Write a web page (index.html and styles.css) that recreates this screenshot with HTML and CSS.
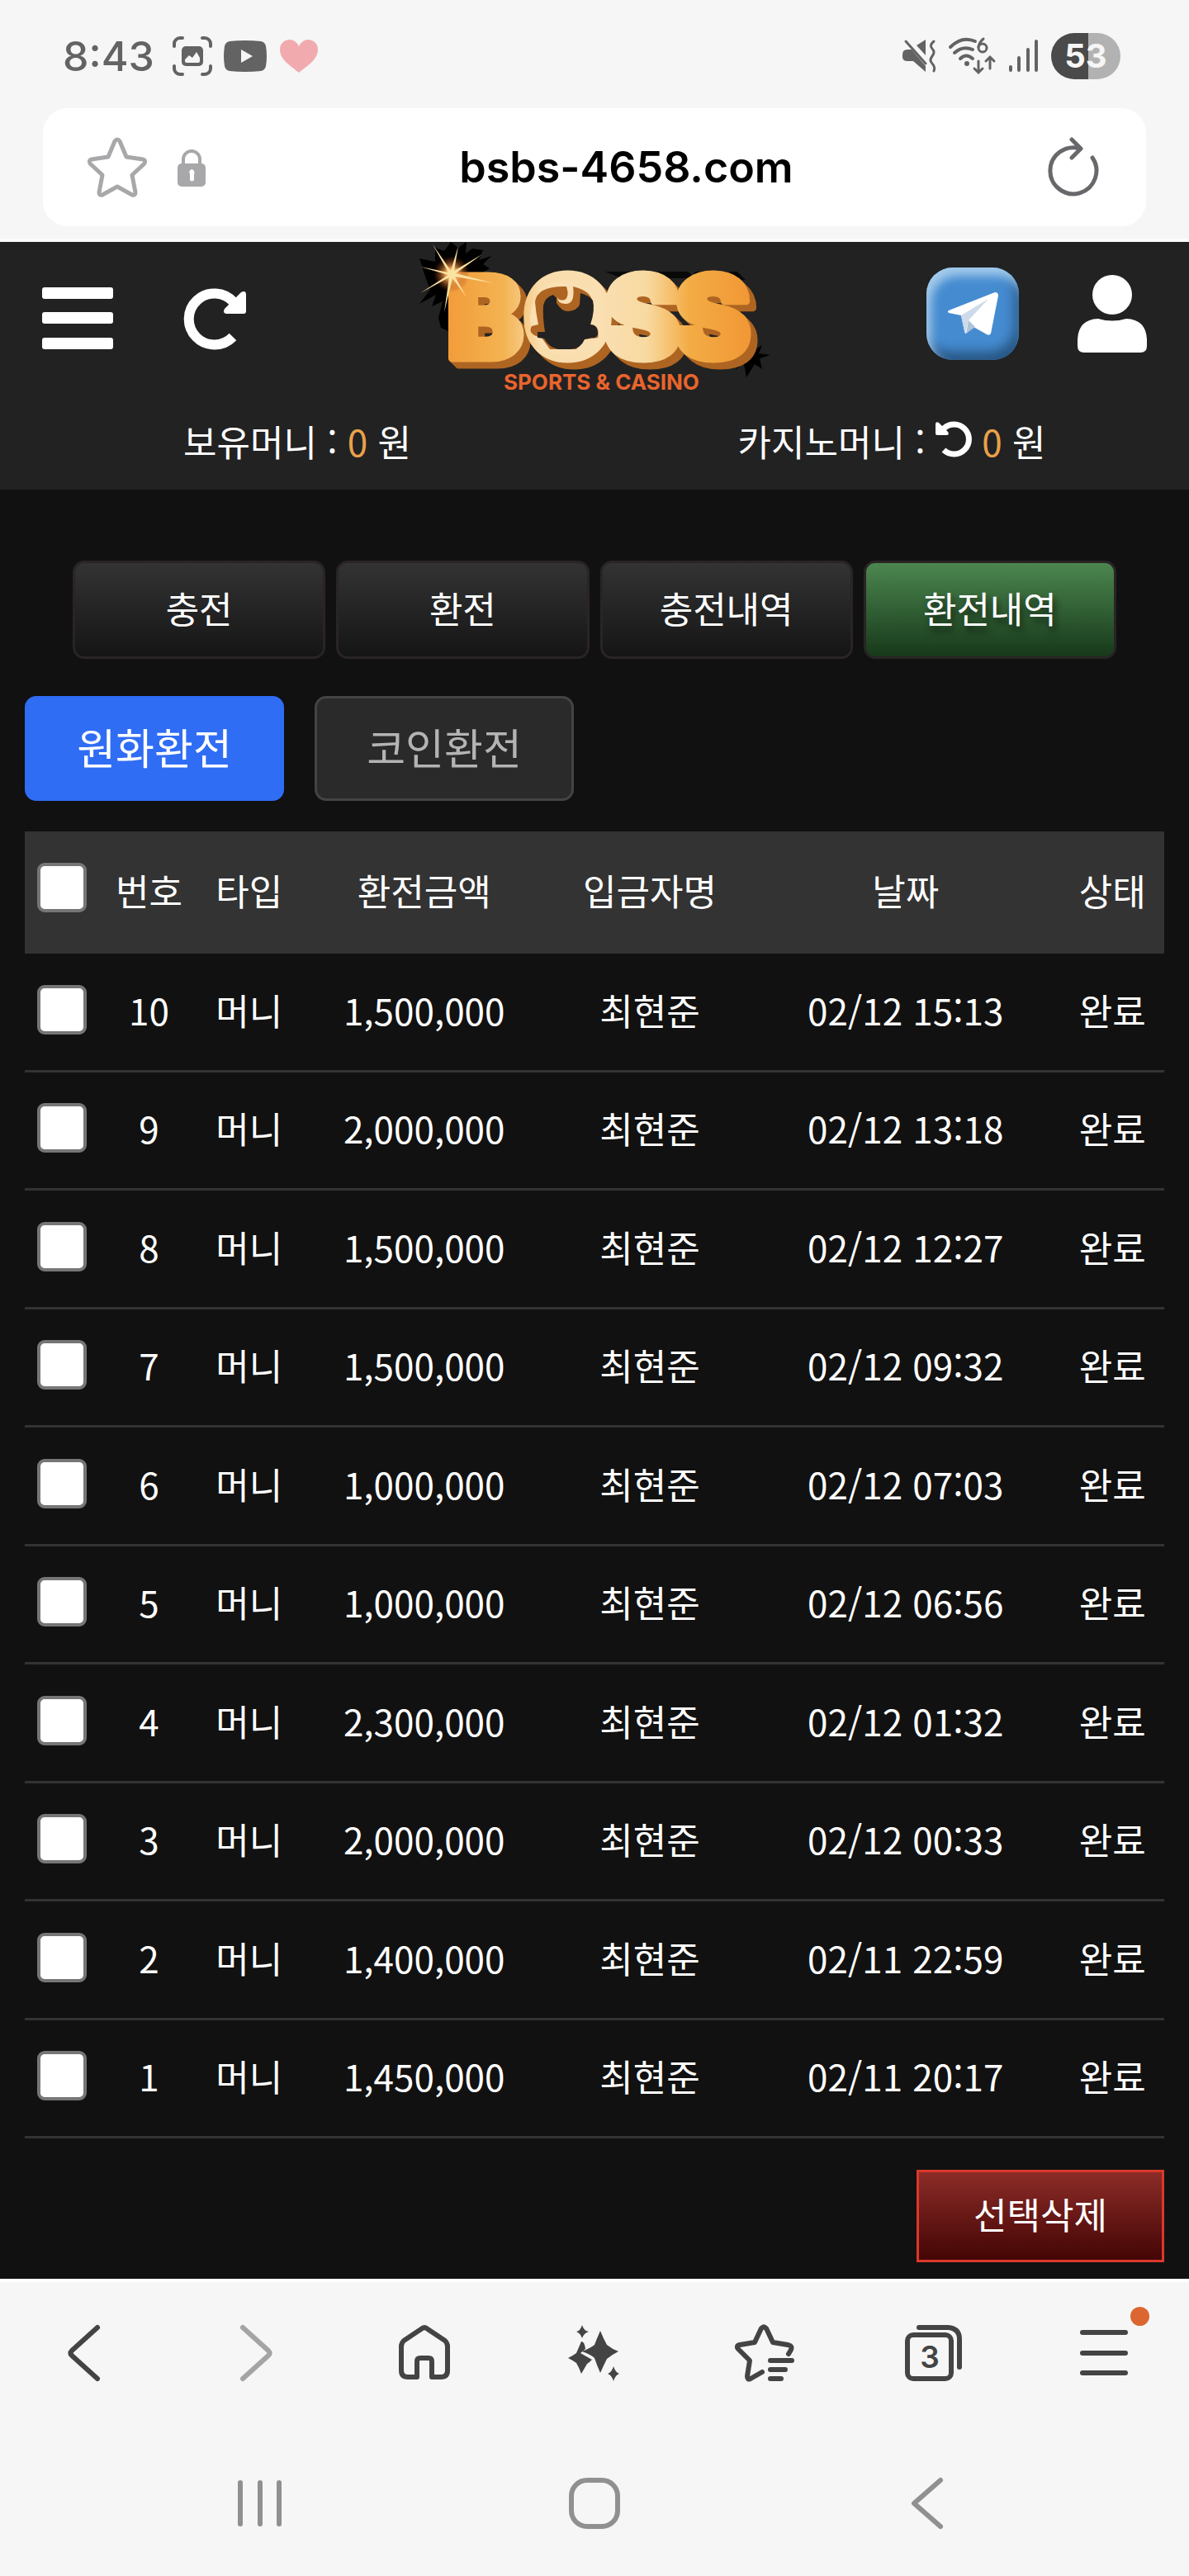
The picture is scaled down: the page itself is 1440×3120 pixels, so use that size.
FILE: index.html
```html
<!DOCTYPE html>
<html lang="ko">
<head>
    <meta charset="UTF-8">
    <meta name="viewport" content="width=device-width, initial-scale=1.0">
    <title>환전내역</title>
    <link rel="stylesheet" href="styles.css">
</head>
<body>
    <div class="browser-top">
        <div class="status-bar">
            <div class="status-left">
                <span class="clock">8:43</span>
                <svg width="48" height="48" viewBox="0 0 48 48" fill="none" stroke="#636363" stroke-width="4" stroke-linecap="round">
                    <path d="M2 12V9a7 7 0 0 1 7-7h3M36 2h3a7 7 0 0 1 7 7v3M46 36v3a7 7 0 0 1-7 7h-3M12 46H9a7 7 0 0 1-7-7v-3"/>
                    <rect x="11" y="12" width="26" height="24" rx="5" fill="#636363" stroke="none"/>
                    <path d="M15 28l5-5 4 3 5-7 4 7v4q0 2-2 2H17q-2 0-2-2z" fill="#f6f6f6" stroke="none"/>
                </svg>
                <svg width="52" height="38" viewBox="0 0 52 38">
                    <path d="M7 1q19-2 38 0 5 1 6 6 2 12 0 24-1 5-6 6-19 2-38 0-5-1-6-6-2-12 0-24 1-5 6-6z" fill="#636363"/>
                    <path d="M21 11l14 8-14 8z" fill="#f6f6f6"/>
                </svg>
                <svg class="heart" width="46" height="40" viewBox="0 0 46 40">
                    <path d="M23 40C12 31 0 24 0 12 0 4 6 0 12 0c5 0 9 4 11 8 2-4 6-8 11-8 6 0 12 4 12 12 0 12-12 19-23 28z" fill="#f1abae"/>
                </svg>
            </div>
            <div class="status-right">
                <svg width="40" height="40" viewBox="0 0 40 40">
                    <path d="M0 18q0-6 6-6h5l17 20v7L13 26H6q-6 0-6-5z" fill="#636363"/>
                    <path d="M17 7L28 0v19z" fill="#636363"/>
                    <path d="M4 2l24 27" stroke="#636363" stroke-width="3" stroke-linecap="round"/>
                    <path d="M38 2q-6 5-2 9t0 9 0 9 2 9" fill="none" stroke="#636363" stroke-width="3" stroke-linecap="round"/>
                </svg>
                <svg width="56" height="44" viewBox="0 0 56 44" fill="none" stroke="#636363" stroke-width="4" stroke-linecap="round">
                    <path d="M2 11Q16-3 32 4M7 18q10-9 22-4M14 25q7-7 15 0"/>
                    <circle cx="22" cy="31" r="3" fill="#636363" stroke="none"/>
                    <circle cx="41" cy="12" r="5" stroke-width="3"/>
                    <path d="M36 11q1-6 6-10M36 28v13M31 37l5 5 5-5M50 37V24M45 28l5-5 5 5" stroke-width="3"/>
                </svg>
                <svg width="36" height="40" viewBox="0 0 36 40" stroke="#636363" stroke-width="4" stroke-linecap="round">
                    <path d="M3 33v4M13 22v15M24 12v25M34 2v35"/>
                </svg>
                <span class="battery">53</span>
            </div>
        </div>
        <div class="url-bar">
            <div class="url-icons">
                <button type="button" aria-label="즐겨찾기">
                    <svg width="72" height="72" viewBox="0 0 72 72" fill="none" stroke="#a8a8aa" stroke-width="5" stroke-linejoin="round">
                        <path d="M33 4q3-4 6 0l8 19 20 3q4 1 2 5L54 45l4 21q0 4-4 3L36 59 18 69q-4 1-4-3l4-21L3 31q-2-4 2-5l20-3z"/>
                    </svg>
                </button>
                <svg class="lock" width="34" height="46" viewBox="0 0 34 46">
                    <path d="M7 22V13a10 10 0 0 1 20 0v9" fill="none" stroke="#a8a8aa" stroke-width="4"/>
                    <rect y="18" width="34" height="28" rx="5" fill="#a8a8aa"/>
                    <path d="M17 25a4 4 0 0 1 3 6v7q-3 3-5 0v-7a4 4 0 0 1 2-6z" fill="#fff"/>
                </svg>
            </div>
            <span class="url">bsbs-4658.com</span>
            <button type="button" aria-label="새로고침">
                <svg width="64" height="74" viewBox="0 0 64 74" fill="none" stroke="#68686c" stroke-width="5" stroke-linecap="round" stroke-linejoin="round">
                    <path d="M55 25A28 28 0 1 1 40 14M30 3l11 11-11 11"/>
                </svg>
            </button>
        </div>
    </div>

    <header class="header">
        <div class="header-row">
            <div class="header-left">
                <button type="button" aria-label="메뉴">
                    <svg width="86" height="76" viewBox="0 0 86 76" fill="#fff">
                        <rect width="86" height="14" rx="3"/>
                        <rect y="30" width="86" height="14" rx="3"/>
                        <rect y="61" width="86" height="14" rx="3"/>
                    </svg>
                </button>
                <button type="button" aria-label="다시 불러오기">
                    <svg width="74" height="74" viewBox="0 0 74 74">
                        <path d="M58 17A31 31 0 1 0 57 59" fill="none" stroke="#fff" stroke-width="12"/>
                        <path d="M67 5q6-3 6 3v20q0 3-3 3H49q-5-1-2-6z" fill="#fff"/>
                    </svg>
                </button>
            </div>
            <a href="#" class="logo" aria-label="BOSS">
                <svg width="424" height="182" viewBox="507 293 424 182">
                    <defs>
                        <linearGradient id="gold" gradientUnits="userSpaceOnUse" x1="544" y1="0" x2="906" y2="0">
                            <stop offset="0" stop-color="#f29d3a"/>
                            <stop offset=".18" stop-color="#f4b351"/>
                            <stop offset=".3" stop-color="#f9dcab"/>
                            <stop offset=".5" stop-color="#fadfb2"/>
                            <stop offset=".66" stop-color="#f8d9a0"/>
                            <stop offset=".8" stop-color="#f3ac45"/>
                            <stop offset="1" stop-color="#f19835"/>
                        </linearGradient>
                        <radialGradient id="glow">
                            <stop offset="0" stop-color="#fff3cf"/>
                            <stop offset=".3" stop-color="#f2a85a"/>
                            <stop offset="1" stop-color="#a03a10" stop-opacity="0"/>
                        </radialGradient>
                        <text id="word" class="logo-word" x="540 633 731 816" y="434">BOSS</text>
                    </defs>
                    <path d="M507 313l19 4 0-17 11 4 8-11 9 7 10-7-1 14 8-6 13 2-5 12 15-5-10 10 8 5-9 5 9 12h-24l-24 60-11-5-3-12 5-20-13 6 5-14-20 11 13-17-6-16z" fill="#000"/>
                    <path d="M732 329h100l10 8h-90zM840 329h52l10 10h-60z" fill="#090909"/>
                    <path d="M912 410l2 13 8-5-4 10 14 2-13 4 3 13-9-6-10 16-3-16-10 6 4-12z" fill="#000"/>
                    <g fill="#ae6522" stroke="#ae6522">
                        <use href="#word" x="8" y="8"/>
                        <use href="#word" x="6" y="6"/>
                        <use href="#word" x="4" y="4"/>
                        <use href="#word" x="2" y="2"/>
                    </g>
                    <use href="#word" fill="url(#gold)" stroke="url(#gold)"/>
                    <!-- face shape inside the O -->
                    <ellipse cx="685" cy="385" rx="44" ry="46" fill="#fadfb2"/>
                    <path d="M647 366q2-20 38-19h8q22 5 24 20l-3 27q12-1 9 15l-16 2-10 12h-32l-10-14q-18-4-12-14l8-2q-3-14-4-27z" fill="#ae6522"/>
                    <path d="M657 370q2-10 12-13l4 4v6q6 10 14 10 11-1 14-8l1-14q11 3 15 9 3 12-3 29 9 0 9 12-2 5-7 4l-9 2q-5 12-17 12h-15q-11-2-17-13l-8-1v-7h9q-3-18-2-32z" fill="#222"/>
                    <path d="M674 360q2 5 9 3 6-4 2-16 7-3 8 0 3 22-10 21-9-1-9-8z" fill="#fadfb2"/>
                    <!-- spark -->
                    <circle cx="546" cy="332" r="22" fill="url(#glow)"/>
                    <path d="M554 298L549 328 583 308 551 331 597 343 550 335 564 360 547 337 537 378 543 336 508 355 542 333 508 323 542 330 523 296 545 328z" fill="#fbe3a2"/>
                    <text class="logo-sub" x="609" y="472">SPORTS &amp; CASINO</text>
                </svg>
            </a>
            <div class="header-right">
                <a href="#" class="telegram" aria-label="텔레그램">
                    <svg width="62" height="52" viewBox="0 0 62 52">
                        <path d="M2 22L58 0q4 0 4 4l-9 46q-2 3-5 1L32 42l-8 7q-2 2-3-2l-4-19L2 25q-2-2 0-3z" fill="#fff"/>
                        <path d="M17 28L50 8 26 34l-4 16q-1-1-1-3z" fill="#cddaea"/>
                        <path d="M26 34l8 8-11 8z" fill="#adc3d8"/>
                    </svg>
                </a>
                <a href="#" aria-label="내 정보">
                    <svg width="84" height="94" viewBox="0 0 84 94" fill="#fff">
                        <circle cx="42" cy="24" r="24"/>
                        <path d="M25 53q17 5 34 0 24 1 25 25v8q0 8-8 8H8q-8 0-8-8v-8q1-24 25-25z"/>
                    </svg>
                </a>
            </div>
        </div>
        <div class="money-row">
            <div>보유머니 : <span class="amount">0</span> 원</div>
            <div>카지노머니 : <button type="button" class="money-reload" aria-label="머니 새로고침"><svg width="44" height="44" viewBox="0 0 44 44"><path d="M10 10A18 18 0 1 1 10 36" fill="none" stroke="#fff" stroke-width="7"/><path d="M4 3Q0 1 0 5v11q0 2 2 2h12q3-1 1-4z" fill="#fff"/></svg></button> <span class="amount">0</span> 원</div>
        </div>
    </header>

    <main class="content">
        <nav class="tabs">
            <a href="#">충전</a>
            <a href="#">환전</a>
            <a href="#">충전내역</a>
            <a href="#" class="active">환전내역</a>
        </nav>

        <div class="sub-tabs">
            <button type="button" class="active">원화환전</button>
            <button type="button">코인환전</button>
        </div>

        <table class="history">
            <colgroup>
                <col class="col-check">
                <col class="col-no">
                <col class="col-type">
                <col class="col-amount">
                <col class="col-name">
                <col class="col-date">
                <col class="col-state">
            </colgroup>
            <thead>
                <tr><th><input type="checkbox" aria-label="전체 선택"></th><th>번호</th><th>타입</th><th>환전금액</th><th>입금자명</th><th>날짜</th><th>상태</th></tr>
            </thead>
            <tbody>
                <tr><td><input type="checkbox" aria-label="10번 선택"></td><td>10</td><td>머니</td><td>1,500,000</td><td>최현준</td><td>02/12 15:13</td><td>완료</td></tr>
                <tr><td><input type="checkbox" aria-label="9번 선택"></td><td>9</td><td>머니</td><td>2,000,000</td><td>최현준</td><td>02/12 13:18</td><td>완료</td></tr>
                <tr><td><input type="checkbox" aria-label="8번 선택"></td><td>8</td><td>머니</td><td>1,500,000</td><td>최현준</td><td>02/12 12:27</td><td>완료</td></tr>
                <tr><td><input type="checkbox" aria-label="7번 선택"></td><td>7</td><td>머니</td><td>1,500,000</td><td>최현준</td><td>02/12 09:32</td><td>완료</td></tr>
                <tr><td><input type="checkbox" aria-label="6번 선택"></td><td>6</td><td>머니</td><td>1,000,000</td><td>최현준</td><td>02/12 07:03</td><td>완료</td></tr>
                <tr><td><input type="checkbox" aria-label="5번 선택"></td><td>5</td><td>머니</td><td>1,000,000</td><td>최현준</td><td>02/12 06:56</td><td>완료</td></tr>
                <tr><td><input type="checkbox" aria-label="4번 선택"></td><td>4</td><td>머니</td><td>2,300,000</td><td>최현준</td><td>02/12 01:32</td><td>완료</td></tr>
                <tr><td><input type="checkbox" aria-label="3번 선택"></td><td>3</td><td>머니</td><td>2,000,000</td><td>최현준</td><td>02/12 00:33</td><td>완료</td></tr>
                <tr><td><input type="checkbox" aria-label="2번 선택"></td><td>2</td><td>머니</td><td>1,400,000</td><td>최현준</td><td>02/11 22:59</td><td>완료</td></tr>
                <tr><td><input type="checkbox" aria-label="1번 선택"></td><td>1</td><td>머니</td><td>1,450,000</td><td>최현준</td><td>02/11 20:17</td><td>완료</td></tr>
            </tbody>
        </table>

        <div class="actions">
            <button type="button" class="delete">선택삭제</button>
        </div>
    </main>

    <footer class="browser-bottom">
        <nav class="toolbar">
            <button type="button" aria-label="뒤로">
                <svg width="44" height="68" viewBox="0 0 44 68"><path d="M37 3L6 31q-3 3 0 6l31 28"/></svg>
            </button>
            <button type="button" class="disabled" aria-label="앞으로">
                <svg width="44" height="68" viewBox="0 0 44 68"><path d="M7 3l31 28q3 3 0 6L7 65"/></svg>
            </button>
            <button type="button" aria-label="홈">
                <svg width="62" height="68" viewBox="0 0 62 68"><path d="M22 63H11q-8 0-8-8V26q0-4 3-7L27 5q4-4 8 0l21 14q3 3 3 7v29q0 8-8 8H40V44q0-4-4-4H26q-4 0-4 4z"/></svg>
            </button>
            <button type="button" aria-label="AI 도우미">
                <svg class="filled" width="64" height="68" viewBox="0 0 64 68">
                    <path d="M17 0q2 7 8 8-6 2-8 8-2-6-7-8 5-1 7-8zM16 20q4 0 5 9l-6 5 14 8q-4 4-6 5-4 7-7 12-3-8-6-13-4-3-10-6 6-3 10-6 3-7 6-14zM39 7q4 10 8 17 6 5 14 8-8 4-14 9-4 8-8 17-4-9-7-18-4-4-15-8 10-4 15-8 3-8 7-17zM55 50q2 7 7 9-5 2-7 9-2-7-7-9 5-2 7-9z"/>
                </svg>
            </button>
            <button type="button" aria-label="북마크 목록">
                <svg width="72" height="68" viewBox="0 0 72 68"><path d="M33 57L19 65q-4 2-4-3l3-19L4 29q-3-4 2-5l18-3 8-17q3-3 6 0l8 17 18 3q6 1 4 6l-3 5M43 43h26M43 54h18M43 65h13"/></svg>
            </button>
            <button type="button" class="tab-button" aria-label="열린 탭">
                <svg width="70" height="68" viewBox="0 0 70 68"><rect x="3" y="12" width="53" height="53" rx="7"/><path d="M17 3h35q14 1 14 14v34"/></svg>
                <span class="tab-count">3</span>
            </button>
            <button type="button" class="menu-button" aria-label="더보기">
                <svg width="58" height="68" viewBox="0 0 58 68"><path d="M3 9h52M3 34h52M3 58h52"/></svg>
                <span class="dot"></span>
            </button>
        </nav>
        <nav class="system-nav">
            <button type="button" aria-label="최근 앱">
                <svg width="60" height="62" viewBox="0 0 60 62"><path d="M4 6v50M28 6v50M51 6v50"/></svg>
            </button>
            <button type="button" aria-label="홈 화면">
                <svg width="62" height="62" viewBox="0 0 62 62"><rect x="3" y="3" width="56" height="56" rx="19"/></svg>
            </button>
            <button type="button" aria-label="이전">
                <svg width="40" height="62" viewBox="0 0 40 62"><path d="M36 3L4 31l32 28"/></svg>
            </button>
        </nav>
    </footer>
</body>
</html>
```

FILE: styles.css
```css
* {
    box-sizing: border-box;
}

body {
    margin: 0;
    background: #111;
    color: #fff;
    font-family: "Noto Sans CJK KR", sans-serif;
    font-size: 44px;
    font-weight: 400;
    line-height: 64px;
}

a {
    color: inherit;
    text-decoration: none;
}

button {
    margin: 0;
    padding: 0;
    border: none;
    background: none;
    color: inherit;
    font: inherit;
    cursor: pointer;
}

svg {
    display: block;
    overflow: visible;
}

/* Browser top */
.browser-top {
    padding: 36px 52px 15px;
    background: #f6f6f6;
    border-bottom: 4px solid #fcfcfc;
}

.status-bar {
    display: flex;
    justify-content: space-between;
    align-items: center;
    height: 64px;
    margin-bottom: 31px;
    padding: 0 31px 0 24px;
    font-family: Inter, sans-serif;
}

.status-left,
.status-right {
    display: flex;
    align-items: center;
}

.status-left {
    gap: 14px;
}

.status-right {
    gap: 16px;
}

.clock {
    margin-right: 8px;
    color: #636363;
    font-size: 50px;
    font-weight: 500;
}

.heart {
    margin-left: 2px;
}

.battery {
    width: 84px;
    height: 56px;
    border-radius: 28px;
    background: linear-gradient(90deg, #4a4a4a 53%, #b2b2b2 53%);
    color: #f6f6f6;
    font-size: 40px;
    font-weight: 700;
    line-height: 56px;
    text-align: center;
}

.url-bar {
    display: grid;
    grid-template-columns: auto 1fr auto;
    align-items: center;
    height: 143px;
    padding: 0 56px 0 54px;
    border-radius: 30px;
    background: #fff;
}

.url-icons {
    display: flex;
    align-items: center;
    gap: 37px;
}

.url {
    color: #000;
    font-family: Inter, sans-serif;
    font-size: 52px;
    font-weight: 600;
    text-align: center;
}

/* Header */
.header {
    background: #222;
}

.header-row {
    display: grid;
    grid-template-columns: 1fr auto 1fr;
    align-items: center;
    padding: 0 51px;
}

.header-left {
    display: flex;
    align-items: center;
    gap: 88px;
    padding-top: 4px;
}

.header-right {
    display: flex;
    align-items: center;
    justify-content: flex-end;
    gap: 71px;
    padding-bottom: 8px;
}

.logo-word {
    font-family: Inter, sans-serif;
    font-size: 138px;
    font-weight: 900;
    stroke-width: 9px;
    stroke-linejoin: round;
}

.logo-sub {
    fill: #e9652d;
    font-family: Inter, sans-serif;
    font-size: 26px;
    font-weight: 700;
}

.telegram {
    display: flex;
    align-items: center;
    justify-content: center;
    width: 112px;
    height: 112px;
    border-radius: 32px;
    background: #458bd0;
    box-shadow: inset 6px 10px 12px #a3cbec, inset -5px -10px 14px #275683;
}

.money-row {
    display: grid;
    grid-template-columns: 1fr 1fr;
    padding: 27px 0;
    text-align: center;
}

.amount {
    color: #eaa14a;
}

.money-reload svg {
    display: inline-block;
}

/* Content */
.content {
    padding: 86px 30px 20px;
}

.tabs {
    display: grid;
    grid-template-columns: repeat(4, 1fr);
    gap: 13px;
    margin-bottom: 45px;
    padding: 0 58px;
}

.tabs a {
    height: 119px;
    border: 3px solid #2a2425;
    border-radius: 14px;
    background: linear-gradient(#333, #151515);
    line-height: 108px;
    text-align: center;
}

.tabs .active {
    background: linear-gradient(#4c864f, #17391a);
    text-shadow: 3px 6px 8px rgba(0, 0, 0, 0.6);
}

.sub-tabs {
    display: flex;
    gap: 37px;
    margin-bottom: 37px;
}

.sub-tabs button {
    width: 314px;
    height: 127px;
    padding-bottom: 6px;
    border: 3px solid #444;
    border-radius: 14px;
    background: #2a2a2a;
    color: #b4b4b4;
    font-size: 51px;
}

.sub-tabs .active {
    border-color: #306df5;
    background: #306df5;
    color: #fff;
}

.history {
    width: 100%;
    table-layout: fixed;
    border-spacing: 0;
    text-align: center;
}

.col-check { width: 6.5%; }
.col-no { width: 8.8%; }
.col-type { width: 8.8%; }
.col-amount { width: 21.9%; }
.col-name { width: 17.7%; }
.col-date { width: 27.2%; }
.col-state { width: 9.1%; }

.history th,
.history td {
    padding: 0 0 6px;
    font-weight: 400;
}

.history th {
    height: 148px;
    background: #333;
}

.history td {
    height: 144px;
    border-bottom: 3px solid #333;
}

.history tr:nth-child(even) td {
    height: 143px;
}

.history input {
    display: block;
    appearance: none;
    width: 60px;
    height: 60px;
    margin: 0 auto;
    border: 4px solid #767676;
    border-radius: 9px;
    background: #fff;
}

.history th:first-child {
    padding-bottom: 12px;
}

.history input:checked {
    background: #306df5;
}

.actions {
    display: flex;
    justify-content: flex-end;
    margin-top: 38px;
}

.delete {
    width: 300px;
    height: 112px;
    padding-bottom: 6px;
    border: 3px solid #db382c;
    background: linear-gradient(#8c2c28, #430504);
}

/* Browser bottom */
.browser-bottom {
    border-top: 4px solid #fff;
    background: #f6f6f6;
}

.browser-bottom svg {
    fill: none;
    stroke: #444;
    stroke-width: 6px;
    stroke-linecap: round;
    stroke-linejoin: round;
}

.browser-bottom .filled {
    fill: #444;
    stroke: none;
}

.browser-bottom .disabled svg {
    stroke: #a4a4a4;
}

.browser-bottom .system-nav svg {
    stroke: #909090;
}

.toolbar {
    display: grid;
    grid-template-columns: repeat(7, 1fr);
    justify-items: center;
    padding: 52px 0;
}

.tab-button,
.menu-button {
    position: relative;
}

.tab-count {
    position: absolute;
    top: 12px;
    left: 0;
    width: 59px;
    color: #444;
    font-family: Inter, sans-serif;
    font-size: 37px;
    font-weight: 600;
    line-height: 54px;
    text-align: center;
}

.dot {
    position: absolute;
    top: -22px;
    right: -26px;
    width: 23px;
    height: 23px;
    border-radius: 50%;
    background: #dc6630;
}

.system-nav {
    display: grid;
    grid-template-columns: repeat(3, 1fr);
    justify-items: center;
    padding: 65px 8% 57px;
}
```
